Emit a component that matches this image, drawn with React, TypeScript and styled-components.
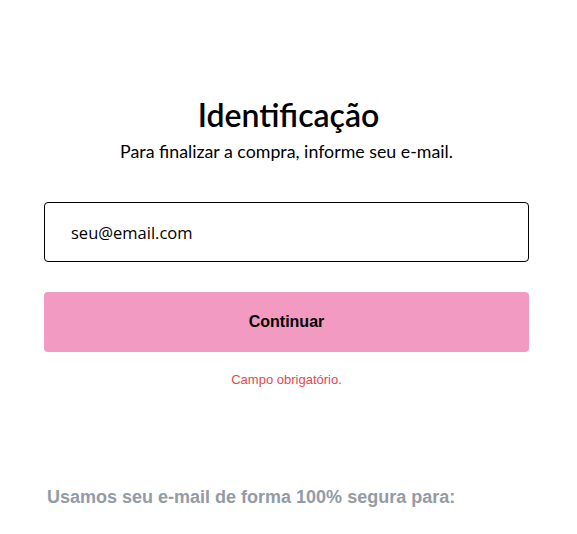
import React from 'react';
import styled, { createGlobalStyle } from 'styled-components';

const GlobalStyle = createGlobalStyle`
	body {
		margin: 0;
		background: #fff;
	}
`;

const App = () => {
	return (
		<>
			<GlobalStyle />
			<StyledPage>
				<header>
					<h1>Identificação</h1>
					<p>Para finalizar a compra, informe seu e-mail.</p>
				</header>
				<form onSubmit={(e) => e.preventDefault()}>
					<EmailInput type='email' placeholder='seu@email.com' />
					<SubmitButton type='submit'>Continuar</SubmitButton>
					<ErrorMsg>Campo obrigatório.</ErrorMsg>
				</form>
				<SafeNote>Usamos seu e-mail de forma 100% segura para:</SafeNote>
			</StyledPage>
		</>
	);
};

const StyledPage = styled.main`
	width: 485px;
	margin: 0 0 0 44px;
	padding-top: 95px;

	header {
		text-align: center;
		font-family: Lato, 'Noto Sans', sans-serif;
		color: #000;

		h1 {
			margin: 0 0 5px 4px;
			font-size: 32px;
			font-weight: 600;
			line-height: 40px;
		}

		p {
			margin: 0;
			font-size: 17.8px;
			line-height: 22px;
		}
	}

	form {
		display: flex;
		flex-direction: column;
		margin-top: 40px;
	}
`;

const EmailInput = styled.input`
	box-sizing: border-box;
	height: 60px;
	width: 100%;
	padding: 0 26px;
	border: 1px solid #000;
	border-radius: 4px;
	font-family: 'Open Sans', sans-serif;
	font-size: 16.5px;
	color: #000;
	outline: none;

	&::placeholder {
		color: #000;
		opacity: 1;
	}
`;

const SubmitButton = styled.button`
	height: 60px;
	margin-top: 30px;
	border: none;
	border-radius: 4px;
	background: #f29ac2;
	font-family: 'Liberation Sans', Arial, sans-serif;
	font-size: 16px;
	font-weight: 700;
	color: #000;
	cursor: pointer;
`;

const ErrorMsg = styled.span`
	margin-top: 20px;
	text-align: center;
	font-family: 'Liberation Sans', Arial, sans-serif;
	font-size: 13px;
	color: #e5474b;
`;

const SafeNote = styled.p`
	margin: 100px 0 0 3px;
	font-family: 'Liberation Sans', Arial, sans-serif;
	font-size: 18px;
	font-weight: 700;
	color: #939ba6;
`;

export default App;
